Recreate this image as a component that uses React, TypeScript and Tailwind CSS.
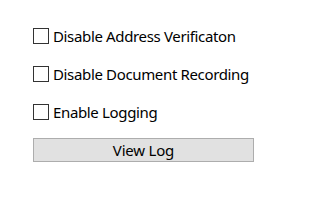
export default function App() {
  const options = ["Disable Address Verificaton", "Disable Document Recording", "Enable Logging"];
  return (
    <div className="h-[209px] w-[320px] bg-white pl-[33px] pt-[28px] text-black" style={{ fontFamily: '"Noto Sans", "Open Sans", sans-serif' }}>
      <div className="flex flex-col gap-[22px]">
        {options.map((label) => (
          <label key={label} className="flex h-[16px] items-center gap-[4px]">
            <span className="h-[16px] w-[16px] shrink-0 border border-[#333333] bg-white" />
            <span className="text-[15px] leading-none tracking-[-0.35px]">{label}</span>
          </label>
        ))}
      </div>
      <button className="mt-[18px] flex h-[24px] w-[221px] items-center justify-center border border-[#adadad] bg-[#e1e1e1] text-[15px] leading-none tracking-[-0.2px]">
        View Log
      </button>
    </div>
  );
}
